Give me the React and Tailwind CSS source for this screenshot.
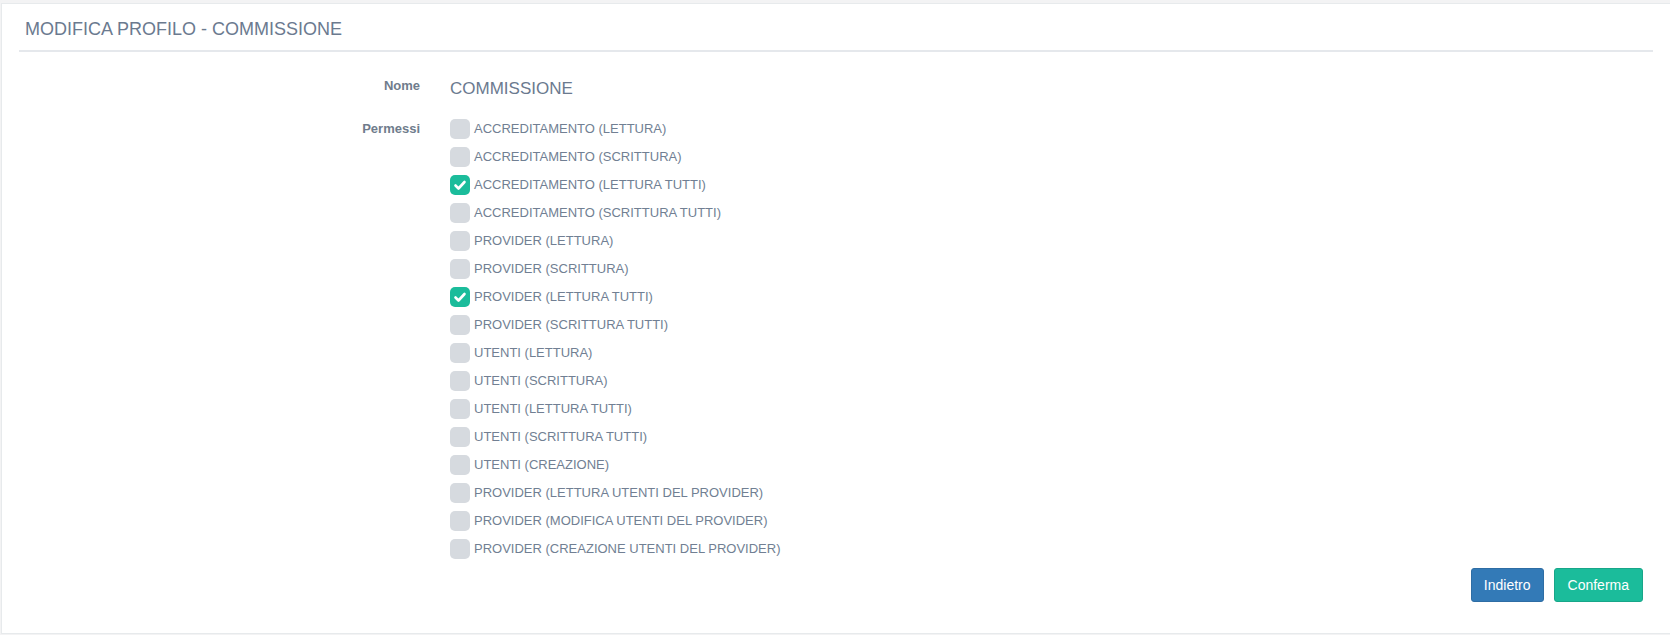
import { useState } from "react";

const PERMESSI = [
  ["ACCREDITAMENTO (LETTURA)", false],
  ["ACCREDITAMENTO (SCRITTURA)", false],
  ["ACCREDITAMENTO (LETTURA TUTTI)", true],
  ["ACCREDITAMENTO (SCRITTURA TUTTI)", false],
  ["PROVIDER (LETTURA)", false],
  ["PROVIDER (SCRITTURA)", false],
  ["PROVIDER (LETTURA TUTTI)", true],
  ["PROVIDER (SCRITTURA TUTTI)", false],
  ["UTENTI (LETTURA)", false],
  ["UTENTI (SCRITTURA)", false],
  ["UTENTI (LETTURA TUTTI)", false],
  ["UTENTI (SCRITTURA TUTTI)", false],
  ["UTENTI (CREAZIONE)", false],
  ["PROVIDER (LETTURA UTENTI DEL PROVIDER)", false],
  ["PROVIDER (MODIFICA UTENTI DEL PROVIDER)", false],
  ["PROVIDER (CREAZIONE UTENTI DEL PROVIDER)", false],
];

function Checkbox({ label, checked, onToggle }) {
  return (
    <label className="flex items-center h-[28px] cursor-pointer" onClick={onToggle}>
      <span
        className={`w-[20px] h-[20px] rounded-[5px] flex items-center justify-center ${
          checked ? "bg-[#1bbc9b]" : "bg-[#d6dadf]"
        }`}
      >
        {checked && (
          <svg width="14" height="14" viewBox="0 0 14 14" fill="none">
            <polyline
              points="2.5,7.5 5.5,10.5 11.5,4"
              stroke="white"
              strokeWidth="2.6"
              strokeLinecap="round"
              strokeLinejoin="round"
            />
          </svg>
        )}
      </span>
      <span className="ml-[4px] text-[13px] text-[#717f93]">{label}</span>
    </label>
  );
}

function App() {
  const [perms, setPerms] = useState(PERMESSI.map((p) => p[1]));

  const toggle = (i) => {
    setPerms((prev) => prev.map((v, j) => (j === i ? !v : v)));
  };

  return (
    <div className="min-h-screen bg-[#f3f3f4] pt-[3px] font-['Liberation_Sans',Arial,sans-serif]">
      <div className="ml-px h-[631px] bg-white border border-r-0 border-[#e7eaec] px-[17px]">
        {/* Header */}
        <div className="h-[48px] pt-[15px] pl-[6px] border-b-2 border-[#e5e8ec]">
          <h1 className="text-[18px] leading-[20px] text-[#6b7a8f]">MODIFICA PROFILO - COMMISSIONE</h1>
        </div>

        {/* Form */}
        <div className="mt-[25px] flex items-start">
          <div className="w-[401px] text-right pt-px text-[13px] leading-4 font-bold text-[#6f7c8c]">Nome</div>
          <div className="ml-[30px] text-[17px] leading-[24px] text-[#6b7a8f]">COMMISSIONE</div>
        </div>

        <div className="mt-[14px] flex items-start">
          <div className="w-[401px] text-right text-[13px] leading-[28px] font-bold text-[#6f7c8c]">Permessi</div>
          <div className="ml-[30px] flex flex-col">
            {PERMESSI.map(([label], i) => (
              <Checkbox key={label} label={label} checked={perms[i]} onToggle={() => toggle(i)} />
            ))}
          </div>
        </div>

        {/* Buttons */}
        <div className="mt-[5px] mr-[10px] flex justify-end gap-[10px]">
          <button className="h-[34px] px-[12px] text-[14px] text-white bg-[#337ab7] border border-[#2e6da4] rounded-[3px]">
            Indietro
          </button>
          <button className="h-[34px] px-[13px] text-[14px] text-white bg-[#1bbc9b] border border-[#18a689] rounded-[3px]">
            Conferma
          </button>
        </div>
      </div>
    </div>
  );
}

export default App;
